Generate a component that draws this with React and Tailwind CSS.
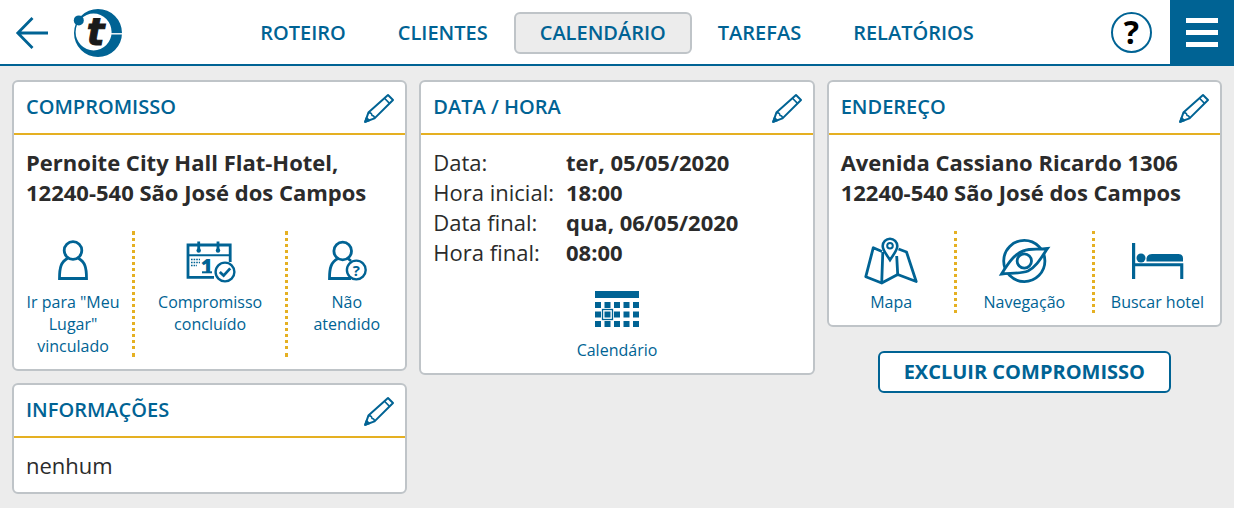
import React from 'react';

const NAV_ITEMS = ['ROTEIRO', 'CLIENTES', 'CALENDÁRIO', 'TAREFAS', 'RELATÓRIOS'];

const SCHEDULE = [
  { label: 'Data:', value: 'ter, 05/05/2020' },
  { label: 'Hora inicial:', value: '18:00' },
  { label: 'Data final:', value: 'qua, 06/05/2020' },
  { label: 'Hora final:', value: '08:00' },
];

function Icon({ children }) {
  return (
    <svg viewBox="0 0 60 60" className="block size-[60px] shrink-0" fill="none" stroke="currentColor" strokeWidth="2.8" aria-hidden="true">
      {children}
    </svg>
  );
}

function PersonIcon() {
  return (
    <Icon>
      <circle cx="30" cy="19.5" r="8.8" />
      <path d="M25 27C18 31 16.5 36 16.5 47.5H43.5C43.5 36 42 31 35 27" />
    </Icon>
  );
}

function DoneIcon() {
  return (
    <Icon>
      <path d="M34 46.3H8V14H50.2V31" />
      <path d="M8 24.2H50" strokeWidth="2" />
      <path d="M18.7 10.5V20M38 10.5V20" />
      <circle cx="18.7" cy="19.5" r="2.2" fill="currentColor" stroke="none" />
      <circle cx="38" cy="19.5" r="2.2" fill="currentColor" stroke="none" />
      <path d="M11 28.5H20M11 31.5H20M11 34.5H17" strokeWidth="1.4" strokeDasharray="1.6 1" />
      <text x="26.5" y="42" textAnchor="middle" className="font-['Open_Sans',sans-serif] text-[20px] font-extrabold" fill="currentColor" stroke="none">1</text>
      <path d="M22 41.3H32" strokeWidth="2" />
      <circle cx="45" cy="41" r="9.4" fill="white" strokeWidth="2.4" />
      <path d="M39.8 41L43.6 44.6L50.2 37.4" />
    </Icon>
  );
}

function MissedIcon() {
  return (
    <Icon>
      <circle cx="25.7" cy="20" r="8.8" />
      <path d="M21 27.5C14 31 12.5 37 12.5 47.5H34M31 27.5L34 30" />
      <circle cx="39.3" cy="39" r="9.4" strokeWidth="2.4" />
      <text x="39.3" y="44.5" textAnchor="middle" className="font-['Open_Sans',sans-serif] text-[15px] font-bold" fill="currentColor" stroke="none">?</text>
    </Icon>
  );
}

function CalendarIcon() {
  return (
    <Icon>
      <g fill="currentColor" stroke="none">
        <rect x="8" y="12" width="44" height="7" />
        {[23, 32.5, 42].map((y) =>
          [8, 17.5, 27, 36.5, 46].map((x) => <rect key={`${x}-${y}`} x={x} y={y} width="6" height="6" />)
        )}
      </g>
      <rect x="15.5" y="30.5" width="10" height="10" strokeWidth="1.3" />
    </Icon>
  );
}

function MapIcon() {
  return (
    <Icon>
      <path d="M21 20.5L12.3 16.7L4.8 45.7L20.7 52L36.7 43.5L55.2 50.5L45.5 21L37.5 18" strokeLinejoin="round" />
      <path d="M21.8 21L20.7 52M35.7 25L36.7 43.5" />
      <path d="M29 29C26 24 21.7 19.5 21.7 15A7.3 7.3 0 0 1 36.3 15C36.3 19.5 32 24 29 29Z" fill="white" strokeWidth="2.6" />
      <circle cx="29" cy="14.7" r="2.8" strokeWidth="2" />
    </Icon>
  );
}

function CompassIcon() {
  return (
    <Icon>
      <circle cx="30.3" cy="30" r="20.6" />
      <path d="M7.5 43C15 31 22 20 35 18.5C41 18 47 18.5 53.5 17.5C47 27 42 36 34 40C26 43 16 42 7.5 43Z" fill="white" strokeWidth="2.8" />
      <circle cx="30.3" cy="30" r="7.2" strokeWidth="2.8" />
    </Icon>
  );
}

function BedIcon() {
  return (
    <Icon>
      <g fill="currentColor" stroke="none">
        <path d="M5 12H8.2V32.3H56.3V48H53.2V35.2H8.2V48H5Z" />
        <circle cx="14" cy="27" r="4.5" />
        <path d="M19.5 30.5V27.5Q20 23 25 23H51.5Q56 23 56 27.5V30.5Z" />
      </g>
    </Icon>
  );
}

function PencilIcon() {
  return (
    <svg viewBox="0 0 32 32" className="block size-8" fill="none" stroke="currentColor" strokeWidth="2" strokeLinejoin="round" aria-hidden="true">
      <path d="M2.2 29.8L5.4 20.6L25 3L30 8L11.5 26.4Z" />
      <path d="M5.4 20.6Q9 20.5 9 23.5Q11.5 23.5 11.5 26.4M21.5 6.2L26.5 11.4" strokeWidth="1.6" />
      <path d="M2.2 29.8L3.5 26L6.2 28.4Z" fill="currentColor" />
    </svg>
  );
}

function Logo() {
  return (
    <svg viewBox="0 0 50 50" className="block size-[50px]" role="img" aria-label="Logo">
      <path
        fillRule="evenodd"
        fill="#006394"
        d="M25 1A24 24 0 1 1 25 49A24 24 0 1 1 25 1ZM20.6 5.5A18 18.5 0 1 0 20.6 42.5A18 18.5 0 1 0 20.6 5.5Z"
      />
      <path d="M36 25.8H50" stroke="white" strokeWidth="1.4" />
      <circle cx="5.8" cy="12.4" r="5" fill="#006394" />
      <text x="22.5" y="36.5" textAnchor="middle" className="font-['DejaVu_Sans',sans-serif] text-[37px] font-bold italic" fill="#1a1a1a" stroke="#1a1a1a" strokeWidth="1">t</text>
    </svg>
  );
}

function Card({ title, children }) {
  return (
    <section className="rounded-md border-2 border-[#bfc4c8] bg-white">
      <div className="flex h-[53px] items-center justify-between border-b-2 border-[#e5b022] pr-2.5 pl-3 text-[#006394]">
        <h2 className="pb-0.5 text-xl font-semibold">{title}</h2>
        <button type="button" aria-label={`Editar ${title}`}>
          <PencilIcon />
        </button>
      </div>
      <div className="py-3">{children}</div>
    </section>
  );
}

function Action({ icon, label, divider }) {
  return (
    <div className={`flex ${divider ? 'border-r-3 border-dotted border-[#e5b022]' : ''}`}>
      <button type="button" className="flex min-w-0 flex-1 flex-col items-center px-3 text-base leading-[22px] text-[#006394]">
        {icon}
        {label}
      </button>
    </div>
  );
}

export default function App() {
  return (
    <div className="min-h-screen bg-[#ececec] font-['Open_Sans',sans-serif] text-[#2b2b2b]">
      <header className="grid grid-cols-[1fr_auto_1fr] border-b-2 border-[#006394] bg-white text-[#006394]">
        <div className="flex items-center gap-6 pt-0.5 pl-[15px]">
          <button type="button" aria-label="Voltar">
            <svg viewBox="0 0 34 34" className="block size-[34px]" fill="none" stroke="currentColor" strokeWidth="2.8" aria-hidden="true">
              <path d="M33 17H3M17.5 2L2.8 17L17.5 32" />
            </svg>
          </button>
          <Logo />
        </div>
        <nav className="flex items-center pt-0.5">
          {NAV_ITEMS.map((item) => (
            <a
              key={item}
              href="#"
              className={`flex h-[42px] items-center rounded-md border-2 px-6 text-xl font-semibold ${
                item === 'CALENDÁRIO' ? 'border-[#bfc4c8] bg-[#ececec]' : 'border-transparent'
              }`}
            >
              {item}
            </a>
          ))}
        </nav>
        <div className="flex items-center justify-end gap-[18px]">
          <button type="button" className="flex size-[41px] items-center justify-center rounded-full border-2 border-[#006394] text-[32px] leading-none font-bold text-black">
            ?
          </button>
          <button type="button" aria-label="Menu" className="flex size-16 flex-col items-center justify-center gap-[7px] bg-[#006394]">
            <span className="h-[5px] w-8 bg-white" />
            <span className="h-[5px] w-8 bg-white" />
            <span className="h-[5px] w-8 bg-white" />
          </button>
        </div>
      </header>

      <main className="grid grid-cols-3 items-start gap-3 px-3 py-3.5">
        <div className="flex flex-col gap-3">
          <Card title="COMPROMISSO">
            <p className="px-3 text-[22px] leading-[30px] font-bold">
              Pernoite City Hall Flat-Hotel,
              <br />
              12240-540 São José dos Campos
            </p>
            <div className="mt-6 grid grid-cols-[121fr_153fr_117fr]">
              <Action icon={<PersonIcon />} label={'Ir para "Meu Lugar" vinculado'} divider />
              <Action icon={<DoneIcon />} label="Compromisso concluído" divider />
              <Action icon={<MissedIcon />} label="Não atendido" />
            </div>
          </Card>
          <Card title="INFORMAÇÕES">
            <p className="px-3 text-[22px] leading-[30px]">nenhum</p>
          </Card>
        </div>

        <Card title="DATA / HORA">
          <dl className="grid grid-cols-[auto_1fr] gap-x-3 px-3 text-[22px] leading-[30px]">
            {SCHEDULE.map(({ label, value }) => (
              <React.Fragment key={label}>
                <dt>{label}</dt>
                <dd className="font-bold">{value}</dd>
              </React.Fragment>
            ))}
          </dl>
          <div className="mt-3">
            <Action icon={<CalendarIcon />} label="Calendário" />
          </div>
        </Card>

        <div className="flex flex-col gap-6">
          <Card title="ENDEREÇO">
            <p className="px-3 text-[22px] leading-[30px] font-bold">
              Avenida Cassiano Ricardo 1306
              <br />
              12240-540 São José dos Campos
            </p>
            <div className="mt-6 grid grid-cols-[128fr_138fr_125fr]">
              <Action icon={<MapIcon />} label="Mapa" divider />
              <Action icon={<CompassIcon />} label="Navegação" divider />
              <Action icon={<BedIcon />} label="Buscar hotel" />
            </div>
          </Card>
          <button type="button" className="h-[42px] self-center rounded-md border-2 border-[#006394] bg-white px-6 text-xl font-bold text-[#006394]">
            EXCLUIR COMPROMISSO
          </button>
        </div>
      </main>
    </div>
  );
}
